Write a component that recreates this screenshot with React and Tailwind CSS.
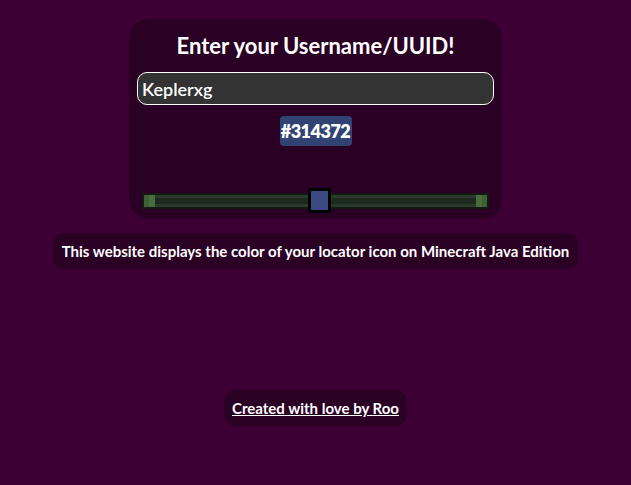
import React, { useState } from 'react';

const font = { fontFamily: 'Lato, "Open Sans", sans-serif' };

function PixelSlider({ value }) {
  // track is drawn as stacked pixel bands, thumb sits on top
  return (
    <div className="relative mx-[13px] h-[25px] flex items-center">
      <div className="w-full h-[16px] bg-[#121a12] p-[2px] flex">
        <div className="w-[5px] h-full bg-[#3f5f35]" />
        <div className="w-[6px] h-full bg-[#4a6b3e]" />
        <div className="flex-1 h-full flex flex-col">
          <div className="h-[3px] bg-[#2a3a2a]" />
          <div className="flex-1 bg-[#1d2a1d]" />
          <div className="h-[3px] bg-[#2a3a2a]" />
        </div>
        <div className="w-[6px] h-full bg-[#4a6b3e]" />
        <div className="w-[5px] h-full bg-[#3f5f35]" />
      </div>
      <div
        className="absolute top-0 w-[23px] h-[25px] bg-black p-[3px] rounded-[2px]"
        style={{ left: `calc(${value}% - 11px)` }}
      >
        <div className="w-full h-full bg-[#3c4a82]" />
      </div>
    </div>
  );
}

export default function App() {
  const [name, setName] = useState('Keplerxg');

  return (
    <div className="min-h-[485px] bg-[#3d0035] flex flex-col items-center pt-[19px]" style={font}>
      <div className="w-[373px] h-[200px] bg-[#2a0024] rounded-[20px] flex flex-col pt-[12px]">
        <h1 className="text-white text-[22px] font-bold text-center leading-[30px]">Enter your Username/UUID!</h1>
        <input
          value={name}
          onChange={e => setName(e.target.value)}
          className="mx-[8px] mt-[11px] h-[33px] bg-[#333333] border border-white rounded-[10px] px-[4px] text-white text-[18px] font-semibold outline-none"
          style={font}
        />
        <div className="flex justify-center mt-[11px]">
          <span className="bg-[#314372] rounded-[4px] w-[72px] h-[30px] flex items-center justify-center text-white text-[18px] font-extrabold tracking-[-0.5px]">#314372</span>
        </div>
        <div className="mt-[42px]">
          <PixelSlider value={51} />
        </div>
      </div>

      <div className="mt-[14px] bg-[#2a0024] rounded-[10px] px-[9px] h-[36px] flex items-center">
        <p className="text-white text-[15px] font-bold">This website displays the color of your locator icon on Minecraft Java Edition</p>
      </div>

      <div className="mt-[121px] bg-[#2a0024] rounded-[12px] px-[8px] h-[36px] flex items-center">
        <a href="#" className="text-white text-[15px] font-bold underline">Created with love by Roo</a>
      </div>
    </div>
  );
}
